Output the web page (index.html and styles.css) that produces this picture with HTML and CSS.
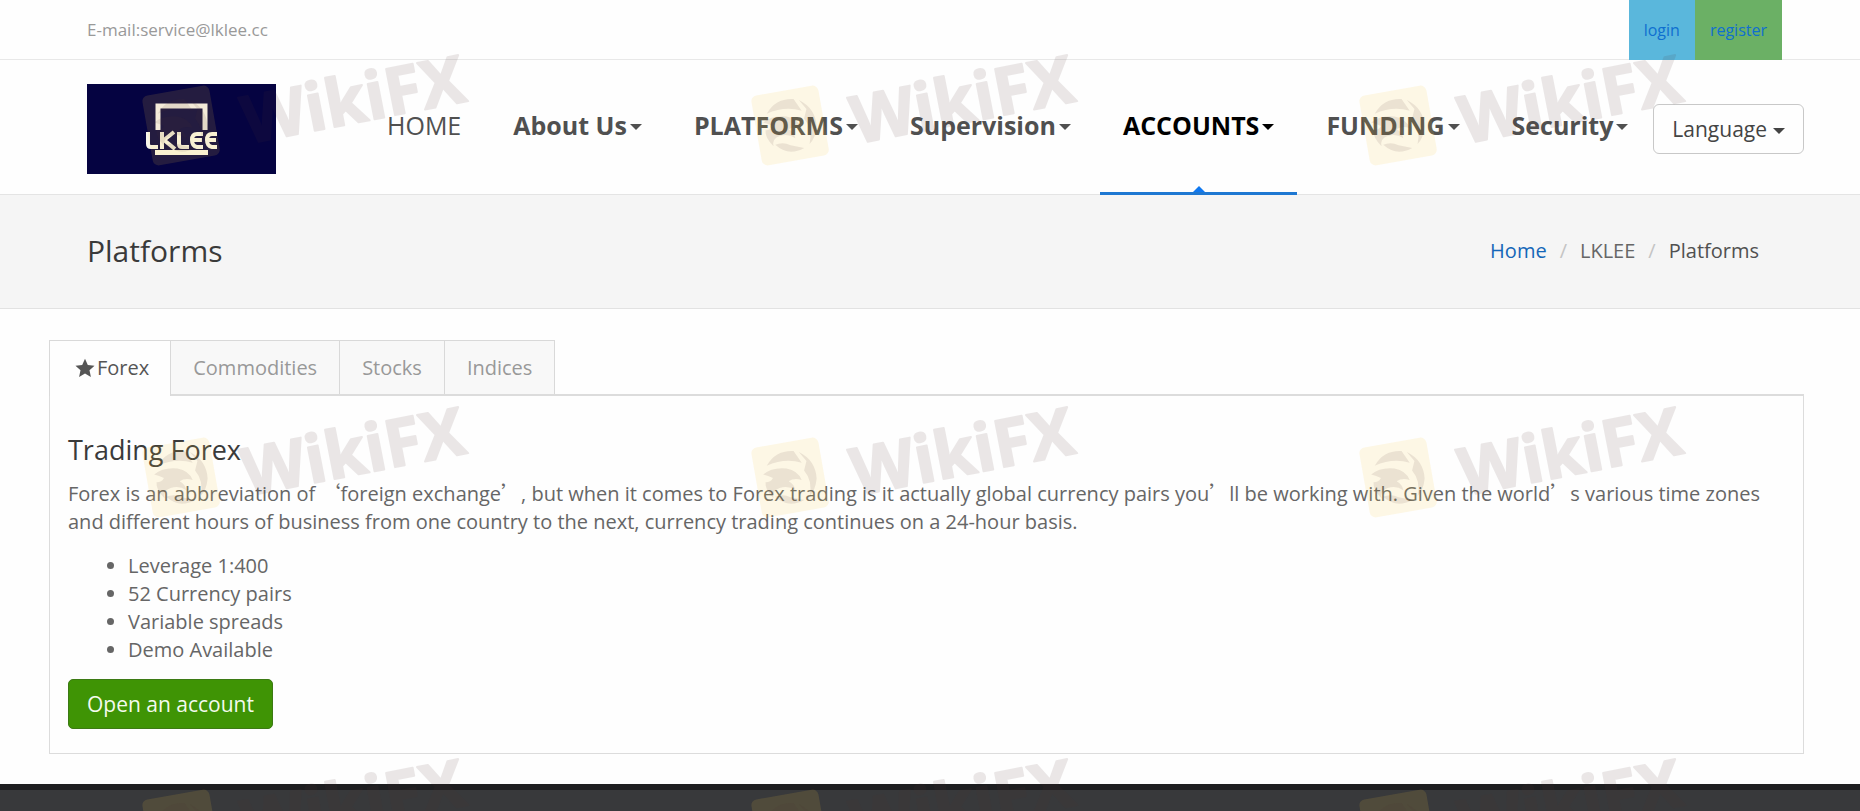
FILE: index.html
```html
<!DOCTYPE html>
<html lang="en">
<head>
<meta charset="utf-8">
<title>Platforms - LKLEE</title>
<link rel="stylesheet" href="styles.css">
</head>
<body>
<div class="topbar">
  <span class="topbar-mail">E-mail:service@lklee.cc</span>
  <div class="topbar-links">
    <a class="topbar-link login" href="#">login</a>
    <a class="topbar-link register" href="#">register</a>
  </div>
</div>

<header class="header">
  <a class="logo" href="#" aria-label="LKLEE">
    <svg viewBox="0 0 189 90" class="logo-mark">
      <path d="M71 46V22H118V46" fill="none" stroke="#f4f0f0" stroke-width="5"/>
      <rect x="68" y="66" width="53" height="5" fill="#fbf8e6"/>
      <g fill="none" stroke="#f8f6ea" stroke-width="4">
        <path d="M61 48V60Q61 63 64 63H71"/>
        <path d="M75 48V65M87 48L77 56L88 65"/>
        <path d="M92 48V60Q92 63 95 63H102"/>
        <path d="M116 50H110Q105 50 105 56T110 63H116M105 56H115"/>
        <path d="M130 50H125Q120 50 120 56T125 63H130M120 56H129"/>
      </g>
    </svg>
  </a>
  <nav class="nav">
    <a class="nav-item plain" href="#">HOME</a>
    <a class="nav-item" href="#">About Us<i class="caret"></i></a>
    <a class="nav-item" href="#">PLATFORMS<i class="caret"></i></a>
    <a class="nav-item" href="#">Supervision<i class="caret"></i></a>
    <a class="nav-item active" href="#">ACCOUNTS<i class="caret"></i></a>
    <a class="nav-item" href="#">FUNDING<i class="caret"></i></a>
    <a class="nav-item" href="#">Security<i class="caret"></i></a>
  </nav>
  <button class="language" type="button">Language <i class="caret"></i></button>
</header>

<section class="title-band">
  <h1 class="page-title">Platforms</h1>
  <nav class="crumbs">
    <a class="crumb-link" href="#">Home</a><span class="slash">/</span><span class="crumb">LKLEE</span><span class="slash">/</span><span class="crumb current">Platforms</span>
  </nav>
</section>

<main class="content">
  <div class="tabs" role="tablist">
    <button class="tab selected" type="button" role="tab" aria-selected="true"><svg class="star" viewBox="0 0 20 20"><path d="M10 0.8L12.8 7L19.5 7.7L14.5 12.2L15.9 18.9L10 15.5L4.1 18.9L5.5 12.2L0.5 7.7L7.2 7Z" fill="#555"/></svg>Forex</button>
    <button class="tab" type="button" role="tab">Commodities</button>
    <button class="tab" type="button" role="tab">Stocks</button>
    <button class="tab" type="button" role="tab">Indices</button>
  </div>
  <div class="panel" role="tabpanel">
    <h2 class="panel-title">Trading Forex</h2>
    <p class="panel-text">Forex is an abbreviation of <span class="wide">‘</span>foreign exchange<span class="wide">’</span>, but when it comes to Forex trading is it actually global currency pairs you<span class="wide">’</span>ll be working with. Given the world<span class="wide">’</span>s various time zones and different hours of business from one country to the next, currency trading continues on a 24-hour basis.</p>
    <ul class="panel-list">
      <li>Leverage 1:400</li>
      <li>52 Currency pairs</li>
      <li>Variable spreads</li>
      <li>Demo Available</li>
    </ul>
    <button class="open-account" type="button">Open an account</button>
  </div>
</main>

<footer class="footer"></footer>

<svg class="watermarks" aria-hidden="true">
  <defs>
    <g id="mark">
      <g transform="rotate(-10)">
        <rect x="-34" y="-35" width="68" height="71" rx="6" fill="#fac83c" fill-opacity=".13"/>
        <g fill="#503232" fill-opacity=".1">
          <path d="M-21-15Q-10-29 8-25L14-12Q-2-20-21-15Z"/>
          <path d="M-26-7Q-16-13-2-9Q9-5 11 5Q4 1-2 4Q3 8 3 14Q-3 8-12 9Q-20 10-20 18Q-27 8-25 1Q-20 2-17-2Q-21-5-26-7Z"/>
          <path d="M13-23Q28-12 26 6Q23 17 16 22Q22 8 15-4L19-13Z"/>
          <path d="M-18 17Q-10 15-3 20L10 25Q-7 31-18 17Z"/>
        </g>
      </g>
      <text class="mark-text" transform="translate(66 19) rotate(-11)">WikiFX</text>
    </g>
  </defs>
  <use href="#mark" x="181" y="125"/><use href="#mark" x="790" y="125"/><use href="#mark" x="1398" y="125"/>
  <use href="#mark" x="181" y="477"/><use href="#mark" x="790" y="477"/><use href="#mark" x="1398" y="477"/>
  <use href="#mark" x="181" y="829"/><use href="#mark" x="790" y="829"/><use href="#mark" x="1398" y="829"/>
</svg>
</body>
</html>
```

FILE: styles.css
```css
* { box-sizing: border-box; }

body {
  margin: 0;
  min-height: 100vh;
  display: flex;
  flex-direction: column;
  position: relative;
  overflow-x: hidden;
  background: #fefefe;
  color: #666;
  font: 20px/28px "Open Sans", "Noto Sans", sans-serif;
}

a { text-decoration: none; }
button { font-family: inherit; cursor: pointer; }

.topbar {
  height: 60px;
  padding: 0 78px 0 87px;
  display: flex;
  align-items: center;
  justify-content: space-between;
  border-bottom: 1px solid #e8e8e8;
}
.topbar-mail { color: #999; font-size: 17px; }
.topbar-links { display: flex; align-self: stretch; margin-bottom: -1px; }
.topbar-link {
  display: flex;
  align-items: center;
  padding: 0 15px;
  font-size: 16px;
  color: #0f6fd0;
}
.login { background: #5ab7dc; }
.register { background: #6bb065; }

.header {
  height: 135px;
  padding: 4px 56px 0 87px;
  display: flex;
  align-items: center;
  border-bottom: 1px solid #e4e4e4;
}
.logo {
  display: block;
  flex-shrink: 0;
  width: 189px;
  height: 90px;
  margin-right: 88px;
  background: #050341;
}
.logo-mark { display: block; width: 100%; height: 100%; }
.nav { display: flex; gap: 6px; align-self: stretch; margin-bottom: -1px; }
.nav-item {
  position: relative;
  display: flex;
  align-items: center;
  gap: 3px;
  padding: 0 23px 10px;
  font-size: 25px;
  font-weight: 700;
  color: #505050;
  white-space: nowrap;
}
.plain { font-weight: 400; }
.active { color: #000; border-bottom: 3px solid #1e78d2; padding-bottom: 7px; }
.active::after {
  content: "";
  position: absolute;
  bottom: 0;
  left: 50%;
  margin-left: -6px;
  border: 6px solid transparent;
  border-top: 0;
  border-bottom: 6px solid #0f78f0;
}
.caret {
  width: 0;
  height: 0;
  border: 6px solid transparent;
  border-top-color: currentColor;
  border-bottom: 0;
  margin-top: 4px;
}
.language {
  display: flex;
  flex-shrink: 0;
  align-items: center;
  justify-content: center;
  gap: 6px;
  height: 50px;
  padding: 0 18px;
  margin-left: auto;
  border: 1px solid #c8c8c8;
  border-radius: 6px;
  background: transparent;
  font-size: 21px;
  color: #444;
}

.title-band {
  height: 114px;
  padding: 0 101px 2px 87px;
  display: flex;
  align-items: center;
  justify-content: space-between;
  background: #f5f5f5;
  border-bottom: 1px solid #e2e2e2;
}
.page-title { margin: 0; font-size: 30px; font-weight: 400; color: #3a3a3a; }
.crumbs { display: flex; }
.crumb-link { color: #1466b8; }
.current { color: #505050; }
.slash { padding: 0 13px; color: #c4c4c4; }

.content { padding: 31px 56px 30px 49px; }
.tabs { display: flex; }
.tab {
  display: flex;
  align-items: center;
  height: 54px;
  padding: 0 22px;
  border: 1px solid #d9d9d9;
  border-width: 1px 1px 0 0;
  background: #f8f8f8;
  color: #999;
  font-size: 20px;
}
.selected {
  position: relative;
  height: 56px;
  margin-bottom: -2px;
  padding: 0 21px 2px 25px;
  border-left-width: 1px;
  background: #fefefe;
  color: #555;
}
.star { width: 20px; height: 20px; margin-right: 2px; }
.panel {
  padding: 38px 18px 24px;
  border: 1px solid #dcdcdc;
  border-top-width: 2px;
}
.panel-title { margin: 0 0 14px; font-size: 27px; line-height: 32px; font-weight: 400; color: #3a3a3a; }
.panel-text { margin: 0 0 16px; }
.wide { font-family: "Noto Sans CJK SC", sans-serif; line-height: 20px; }
.panel-list { margin: 0 0 15px; padding-left: 60px; }
.open-account {
  height: 50px;
  padding: 0 18px;
  border: 1px solid #3c7a14;
  border-radius: 5px;
  background: #3f9405;
  color: #f4fbee;
  font-size: 21px;
}

.footer { flex: 1; min-height: 27px; border-top: 6px solid #1e1e20; background: #38393b; }

.watermarks {
  position: absolute;
  inset: 0;
  width: 100%;
  height: 100%;
  overflow: hidden;
  pointer-events: none;
}
.mark-text {
  font: 700 66px "Open Sans", sans-serif;
  fill: #503232;
  stroke: #503232;
  stroke-width: 2px;
  stroke-linejoin: round;
  opacity: .11;
}
```
